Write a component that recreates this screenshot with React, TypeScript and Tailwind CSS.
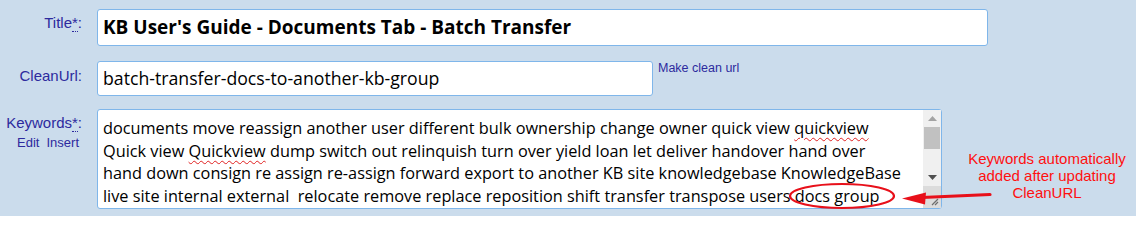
import React from "react";

const lines: { text: string; squiggle?: string; after?: string }[] = [
  { text: "documents move reassign another user different bulk ownership change owner quick view ", squiggle: "quickview" },
  { text: "Quick view ", squiggle: "Quickview", after: " dump switch out relinquish turn over yield loan let deliver handover hand over" },
  { text: "hand down consign re assign re-assign forward export to another KB site knowledgebase KnowledgeBase" },
  { text: "live site internal external  relocate remove replace reposition shift transfer transpose users docs group" },
];

function Label({ text, required }: { text: string; required?: boolean }) {
  return (
    <span className="text-[15px] leading-[17px] text-[#2d2a9e]">
      {text}
      {required && (
        <abbr className="no-underline border-b border-dotted border-[#2d2a9e]" title="required">
          *
        </abbr>
      )}
      :
    </span>
  );
}

function Scrollbar() {
  return (
    <div className="flex w-[18px] flex-col bg-[#f0f0f0]">
      <div className="flex h-[17px] items-center justify-center">
        <svg width="9" height="5" viewBox="0 0 9 5">
          <path d="M0 5 L4.5 0 L9 5 Z" fill="#a3a3a3" />
        </svg>
      </div>
      <div className="mx-[1px] h-[22px] bg-[#c1c1c1]" />
      <div className="flex-1" />
      <div className="flex h-[17px] items-center justify-center">
        <svg width="9" height="5" viewBox="0 0 9 5">
          <path d="M0 0 L4.5 5 L9 0 Z" fill="#505050" />
        </svg>
      </div>
      <div className="relative h-[22px] bg-[#dcdcdc]">
        <svg className="absolute bottom-[2px] right-[2px]" width="10" height="10" viewBox="0 0 10 10">
          <path d="M9 3 L3 9 M9 6 L6 9" stroke="#6d6d6d" strokeWidth="1.2" />
        </svg>
      </div>
    </div>
  );
}

export default function App() {
  return (
    <div className="relative h-[216px] w-[1136px] overflow-hidden bg-[#cbdcec] font-['Liberation_Sans',Arial,sans-serif]">
      <div className="flex flex-col pt-[9px]">
        {/* Title */}
        <div className="flex">
          <div className="w-[82px] pt-[2px] text-right">
            <Label text="Title" required />
          </div>
          <div className="ml-[15px] flex h-[37px] w-[891px] items-center rounded-[3px] border border-[#7fb6ea] bg-white px-[5px] font-['Open_Sans',sans-serif] text-[19px] font-bold text-black">
            KB User's Guide - Documents Tab - Batch Transfer
          </div>
        </div>

        {/* CleanUrl */}
        <div className="mt-[15px] flex">
          <div className="w-[82px] pt-[3px] text-right">
            <Label text="CleanUrl" />
          </div>
          <div className="ml-[15px] flex h-[35px] w-[556px] items-center rounded-[3px] border border-[#7fb6ea] bg-white px-[5px] font-['Open_Sans',sans-serif] text-[17.7px] text-black">
            batch-transfer-docs-to-another-kb-group
          </div>
          <a href="#" className="ml-[5px] text-[12.5px] leading-[14px] text-[#2d2a9e]">
            Make clean url
          </a>
        </div>

        {/* Keywords */}
        <div className="mt-[13px] flex">
          <div className="flex w-[82px] flex-col items-end pt-[5px]">
            <Label text="Keywords" required />
            <div className="mr-[3px] mt-[4px] flex gap-[7px] text-[13px] leading-[15px] text-[#2d2a9e]">
              <a href="#">Edit</a>
              <a href="#">Insert</a>
            </div>
          </div>
          <div className="ml-[15px] flex h-[100px] w-[845px] rounded-[3px] border border-[#7fb6ea] bg-white">
            <div className="flex-1 overflow-hidden px-[5px] pt-[7px] font-['Open_Sans',sans-serif] text-[16.3px] leading-[22.5px] text-black">
              {lines.map((l, i) => (
                <div key={i} className="whitespace-pre">
                  {l.text}
                  {l.squiggle && (
                    <span className="underline decoration-[#e02020] decoration-wavy decoration-[1px] underline-offset-[3px]">
                      {l.squiggle}
                    </span>
                  )}
                  {l.after}
                </div>
              ))}
            </div>
            <Scrollbar />
          </div>
          <div className="ml-[16px] mt-[41px] w-[178px] text-center text-[15px] leading-[17px] text-[#ff1010]">
            Keywords automatically
            <br />
            added after updating
            <br />
            CleanURL
          </div>
        </div>
      </div>

      {/* annotation overlay */}
      <svg className="pointer-events-none absolute left-0 top-0" width="1136" height="216" viewBox="0 0 1136 216">
        <ellipse cx="842" cy="196" rx="52" ry="12" fill="none" stroke="#e8101a" strokeWidth="2.2" />
        <path d="M990 194.5 L922 197.5" stroke="#e8101a" strokeWidth="3.2" strokeLinecap="round" />
        <path d="M902 198.5 L926 192.5 L925 204.5 Z" fill="#e8101a" />
      </svg>
    </div>
  );
}
